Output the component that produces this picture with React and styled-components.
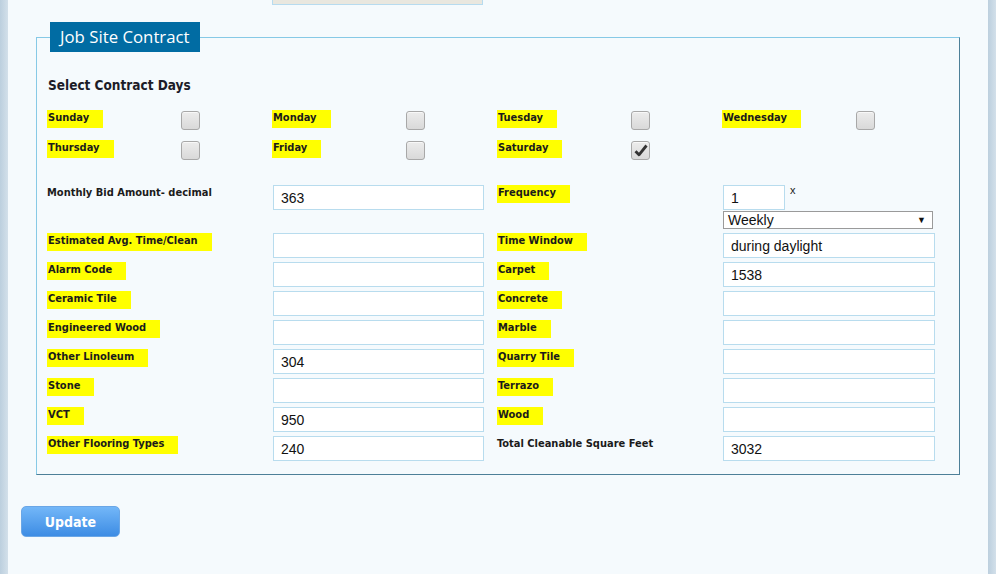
import React from 'react';
import styled, { createGlobalStyle } from 'styled-components';

const GlobalStyle = createGlobalStyle`
  html, body {
    margin: 0;
    padding: 0;
    background: #f5fafd;
  }
  body {
    font-family: "DejaVu Sans Condensed", "DejaVu Sans", Verdana, sans-serif;
  }
`

const Page = styled.div`
  display: flex;
  width: 996px;
  height: 574px;
  overflow: hidden;
`
const SideStrip = styled.div`
  width: 8px;
  flex: none;
  background: linear-gradient(to right, #bccfde, #d3e0ea);
`
const Main = styled.div`
  flex: 1;
  background: #f5fafd;
`
const TopStub = styled.div`
  width: 209px;
  height: 4px;
  margin-left: 264px;
  background: #e9e7df;
  border: 1px solid #b7dbef;
  border-top: none;
`
const Fieldset = styled.fieldset`
  margin: 17px 0 0 28px;
  width: 924px;
  box-sizing: border-box;
  padding: 0 0 13px 11px;
  border-style: solid;
  border-width: 1px;
  border-color: #86c9e6 #4d7f98 #4d7f98 #86c9e6;
  min-width: 0;
`
const Legend = styled.legend`
  margin-left: 2px;
  padding: 0 10px;
  height: 30px;
  line-height: 29px;
  background: #016ca3;
  color: #fff;
  font-family: "Open Sans", sans-serif;
  font-size: 16.8px;
`
const Heading = styled.h3`
  margin: 24px 0 0;
  font-size: 13.5px;
  line-height: 18px;
  font-weight: bold;
  color: #1c1c28;
`
const Grid = styled.div`
  display: grid;
  grid-template-columns: 225px 225px 225px 212px;
  margin-top: ${p => p.$top || 0}px;
  row-gap: ${p => p.$gap || 0}px;
`
const DayCell = styled.div`
  display: flex;
  align-items: flex-start;
`
const DayLabel = styled.div`
  display: flex;
  width: 133px;
  flex: none;
`
const Label = styled.span`
  display: block;
  font-size: 11px;
  font-weight: bold;
  line-height: 13px;
  color: #1b1b1b;
  padding: ${p => (p.$mark ? '1px 14px 4px 1px' : '1px 0 4px')};
  margin-left: -1px;
  background: ${p => (p.$mark ? '#ffff00' : 'transparent')};
`
const LabelCell = styled.div`
  display: flex;
  align-items: flex-start;
`
const Check = styled.span`
  display: flex;
  align-items: center;
  justify-content: center;
  width: 17px;
  height: 17px;
  margin-top: 1px;
  border: 1px solid #a8a8a8;
  border-radius: 3px;
  background: linear-gradient(#ececec, #d9d9d9);
  box-shadow: inset 0 1px 0 #f8f8f8;
`
const Input = styled.div`
  box-sizing: border-box;
  width: ${p => p.$w || 212}px;
  height: 25px;
  background: #fff;
  border: 1px solid #b8dcee;
  padding: 0 7px;
  font-family: "Liberation Sans", Arial, sans-serif;
  font-size: 14px;
  line-height: 25px;
  color: #111;
`
const FreqTop = styled.div`
  display: flex;
  align-items: flex-start;
`
const Times = styled.span`
  margin: 0 0 0 5px;
  font-family: "Liberation Sans", Arial, sans-serif;
  font-size: 11px;
  line-height: 10px;
  color: #222;
`
const Select = styled.div`
  box-sizing: border-box;
  width: 210px;
  height: 18px;
  margin: 1px 0 4px;
  display: flex;
  align-items: center;
  justify-content: space-between;
  padding: 0 6px 0 4px;
  background: #fff;
  border: 1px solid #9a9a9a;
  font-family: "Liberation Sans", Arial, sans-serif;
  font-size: 14px;
  color: #111;
`
const Arrow = styled.span`
  font-size: 9px;
  color: #111;
`
const Actions = styled.div`
  margin: 31px 0 0 13px;
`
const Button = styled.button`
  width: 99px;
  height: 31px;
  border: 1px solid #6aa6e6;
  border-radius: 5px;
  background: linear-gradient(#73b7f8, #3d8ce4);
  color: #fff;
  font-family: "DejaVu Sans Condensed", "DejaVu Sans", Verdana, sans-serif;
  font-size: 14px;
  font-weight: bold;
  cursor: pointer;
`

const CheckMark = () => (
  <svg width="14" height="13" viewBox="0 0 14 13">
    <path d="M1.5 7.2 L5 10.8 L12.5 1.5" fill="none" stroke="#333" strokeWidth="2.8" strokeLinejoin="round" />
  </svg>
)

const days = [
  ['Sunday', false], ['Monday', false], ['Tuesday', false], ['Wednesday', false],
  ['Thursday', false], ['Friday', false], ['Saturday', true],
]

const rows = [
  ['Estimated Avg. Time/Clean', '', 'Time Window', 'during daylight'],
  ['Alarm Code', '', 'Carpet', '1538'],
  ['Ceramic Tile', '', 'Concrete', ''],
  ['Engineered Wood', '', 'Marble', ''],
  ['Other Linoleum', '304', 'Quarry Tile', ''],
  ['Stone', '', 'Terrazo', ''],
  ['VCT', '950', 'Wood', ''],
  ['Other Flooring Types', '240', 'Total Cleanable Square Feet', '3032', true],
]

export default function App() {
  return (
    <Page>
      <GlobalStyle />
      <SideStrip />
      <Main>
        <TopStub />
        <Fieldset>
          <Legend>Job Site Contract</Legend>
          <Heading>Select Contract Days</Heading>
          <Grid $top={16} $gap={10}>
            {days.map(([name, on]) => (
              <DayCell key={name}>
                <DayLabel><Label $mark>{name}</Label></DayLabel>
                <Check>{on && <CheckMark />}</Check>
              </DayCell>
            ))}
          </Grid>
          <Grid $top={25} $gap={4}>
            <LabelCell><Label>Monthly Bid Amount- decimal</Label></LabelCell>
            <div><Input $w={211}>363</Input></div>
            <LabelCell><Label $mark>Frequency</Label></LabelCell>
            <div>
              <FreqTop>
                <Input $w={62}>1</Input>
                <Times>x</Times>
              </FreqTop>
              <Select>Weekly<Arrow>▼</Arrow></Select>
            </div>
          </Grid>
          <Grid $gap={4}>
            {rows.map(([l, lv, r, rv, plain]) => (
              <React.Fragment key={l}>
                <LabelCell><Label $mark>{l}</Label></LabelCell>
                <div><Input $w={211}>{lv}</Input></div>
                <LabelCell><Label $mark={!plain}>{r}</Label></LabelCell>
                <div><Input>{rv}</Input></div>
              </React.Fragment>
            ))}
          </Grid>
        </Fieldset>
        <Actions>
          <Button>Update</Button>
        </Actions>
      </Main>
      <SideStrip />
    </Page>
  )
}
